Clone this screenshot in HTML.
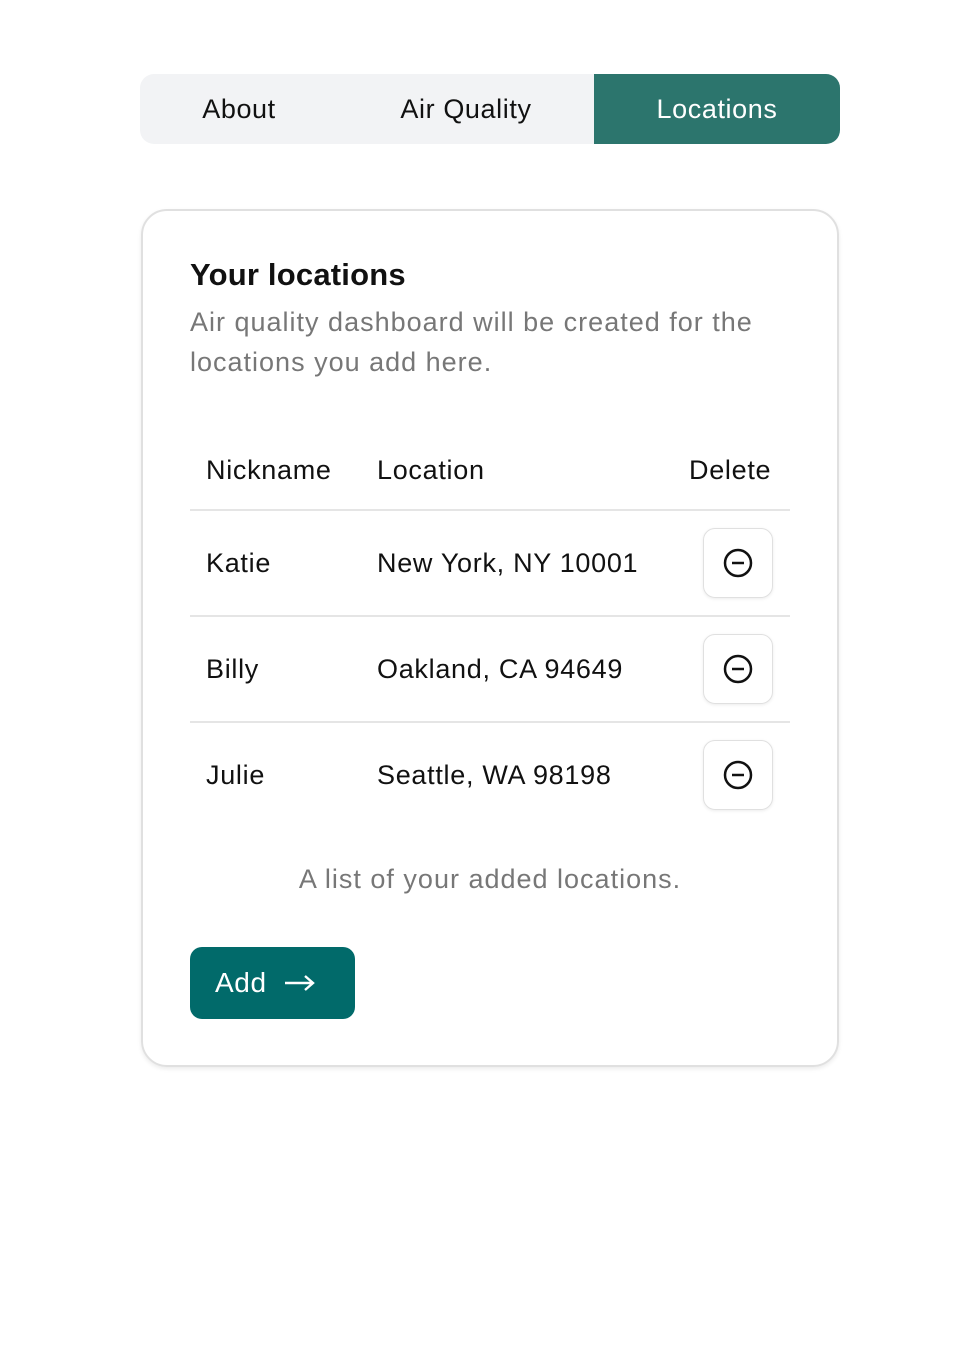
<!DOCTYPE html>
<html><head><style>
body{margin:0;background:#fff;font-family:"Liberation Sans",sans-serif;width:980px;height:1356px;position:relative;overflow:hidden;color:#111}
.tabs{position:absolute;left:140px;top:74px;width:700px;height:70px;background:#f2f3f5;border-radius:14px;overflow:hidden}
.tab{position:absolute;top:0;height:70px;line-height:70px;font-size:27px;text-align:center;letter-spacing:0.6px}
.card{position:absolute;left:141px;top:209px;width:694px;height:854px;border:2px solid #e0e0e0;border-radius:26px;box-shadow:0 2px 4px rgba(0,0,0,.08)}
.t{position:absolute;font-size:27px;white-space:nowrap;letter-spacing:0.7px}
.line{position:absolute;left:190px;width:600px;height:2px;background:#e5e5e5}
.btn{position:absolute;left:703px;width:70px;height:70px;border:1.5px solid #e0e0e0;border-radius:12px;box-shadow:0 1px 3px rgba(0,0,0,.08);box-sizing:border-box}
.btn svg{position:absolute;left:18px;top:18px}
</style></head><body>
<div class="tabs">
<div class="tab" style="left:0;width:198px">About</div>
<div class="tab" style="left:198px;width:256px">Air Quality</div>
<div class="tab" style="left:454px;width:246px;background:#2c756d;color:#fff">Locations</div>
</div>
<div class="card"></div>
<div class="t" style="left:190px;top:257px;font-size:31px;font-weight:bold;letter-spacing:0.2px">Your locations</div>
<div class="t" style="left:190px;top:302px;color:#777;line-height:40px;letter-spacing:1px">Air quality dashboard will be created for the<br>locations you add here.</div>
<div class="t" style="left:206px;top:455px">Nickname</div>
<div class="t" style="left:377px;top:455px">Location</div>
<div class="t" style="left:689px;top:455px">Delete</div>
<div class="line" style="top:509px"></div>
<div class="t" style="left:206px;top:548px">Katie</div>
<div class="t" style="left:377px;top:548px">New York, NY 10001</div>
<div class="btn" style="top:528px"><svg width="32" height="32" viewBox="0 0 32 32"><circle cx="16" cy="16" r="13" fill="none" stroke="#111" stroke-width="2.5"/><path d="M10 16H22" stroke="#111" stroke-width="2.5"/></svg></div>
<div class="line" style="top:615px"></div>
<div class="t" style="left:206px;top:654px">Billy</div>
<div class="t" style="left:377px;top:654px">Oakland, CA 94649</div>
<div class="btn" style="top:634px"><svg width="32" height="32" viewBox="0 0 32 32"><circle cx="16" cy="16" r="13" fill="none" stroke="#111" stroke-width="2.5"/><path d="M10 16H22" stroke="#111" stroke-width="2.5"/></svg></div>
<div class="line" style="top:721px"></div>
<div class="t" style="left:206px;top:760px">Julie</div>
<div class="t" style="left:377px;top:760px">Seattle, WA 98198</div>
<div class="btn" style="top:740px"><svg width="32" height="32" viewBox="0 0 32 32"><circle cx="16" cy="16" r="13" fill="none" stroke="#111" stroke-width="2.5"/><path d="M10 16H22" stroke="#111" stroke-width="2.5"/></svg></div>
<div class="t" style="left:0;width:980px;text-align:center;top:864px;color:#777;letter-spacing:1px">A list of your added locations.</div>
<div style="position:absolute;left:190px;top:947px;width:165px;height:72px;background:#016a6a;border-radius:12px;color:#fff;font-size:28px;line-height:72px;padding-left:25px;box-sizing:border-box;letter-spacing:0.6px">Add<svg width="32" height="20" viewBox="0 0 32 20" style="position:absolute;left:94px;top:26px"><path d="M1 10H29M21 3L29 10L21 17" fill="none" stroke="#fff" stroke-width="2.4"/></svg></div>
</body></html>
